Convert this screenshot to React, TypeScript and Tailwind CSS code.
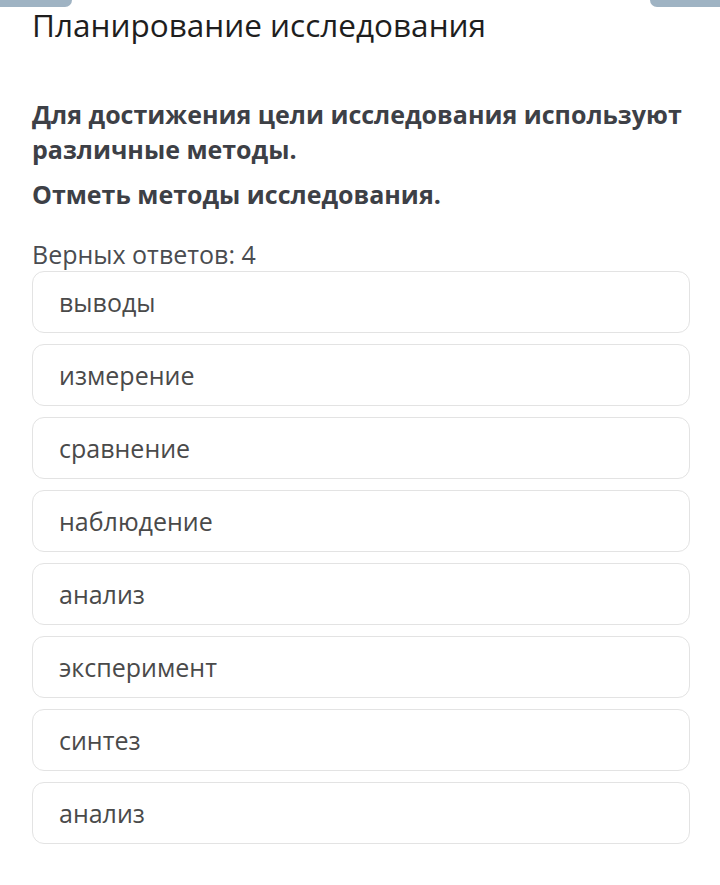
const options = [
  "выводы",
  "измерение",
  "сравнение",
  "наблюдение",
  "анализ",
  "эксперимент",
  "синтез",
  "анализ",
];

export default function App() {
  return (
    <div className="relative min-h-[885px] w-[720px] overflow-hidden bg-white font-['Open_Sans',sans-serif]">
      <div className="absolute left-0 top-0 h-[7px] w-[72px] rounded-br-[8px] bg-[#9fb3c3]" />
      <div className="absolute right-0 top-0 h-[7px] w-[70px] rounded-bl-[8px] bg-[#9fb3c3]" />

      <div className="px-[32px] pt-[4px]">
        <h1 className="text-[31.5px] leading-[42px] font-normal text-[#1e1e1e]">Планирование исследования</h1>

        <div className="mt-[51px] text-[25px] font-bold leading-[35px] text-[#3d4046]">
          <p>Для достижения цели исследования используют различные методы.</p>
          <p className="mt-[10px]">Отметь методы исследования.</p>
        </div>

        <p className="mt-[26px] text-[25px] leading-[32px] text-[#4a4c50]">Верных ответов: 4</p>

        <div className="mt-[1px] flex w-[658px] flex-col gap-[11px]">
          {options.map((o, i) => (
            <div
              key={i}
              className="flex h-[62px] items-center rounded-[12px] border border-[#e3e3e3] bg-white px-[26px] pt-[2px] text-[25px] text-[#4a4a4a]"
            >
              {o}
            </div>
          ))}
        </div>
      </div>
    </div>
  );
}
